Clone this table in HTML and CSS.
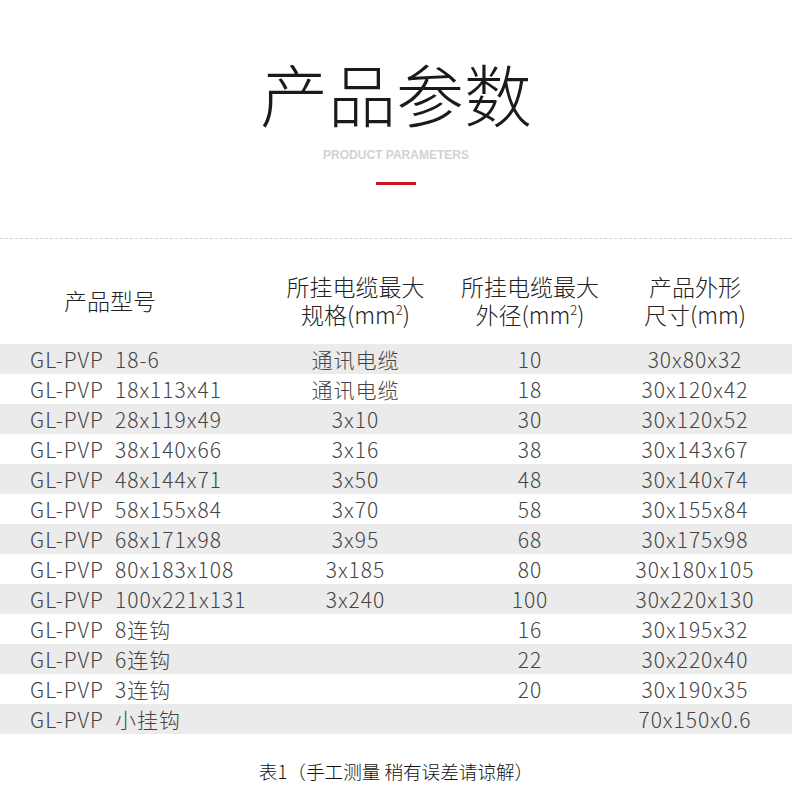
FILE: index.html
```html
<!DOCTYPE html>
<html lang="zh-CN">
<head>
<meta charset="utf-8">
<title>产品参数</title>
<link rel="stylesheet" href="styles.css">
</head>
<body>
<div class="page">
  <header class="hero">
    <h1 class="title">产品参数</h1>
    <p class="subtitle">PRODUCT PARAMETERS</p>
    <span class="accent"></span>
  </header>
  <div class="dashed"></div>
  <div class="table">
    <div class="row head">
      <div class="c1 h1c">产品型号</div>
      <div class="c2"><span class="ln">所挂电缆最大</span><span class="ln">规格(mm<sup>2</sup>)</span></div>
      <div class="c3"><span class="ln">所挂电缆最大</span><span class="ln">外径(mm<sup>2</sup>)</span></div>
      <div class="c4"><span class="ln">产品外形</span><span class="ln">尺寸(mm)</span></div>
    </div>
    <div class="row alt"><div class="c1"><span class="pre">GL-PVP</span>18-6</div><div class="c2">通讯电缆</div><div class="c3">10</div><div class="c4">30x80x32</div></div>
    <div class="row"><div class="c1"><span class="pre">GL-PVP</span>18x113x41</div><div class="c2">通讯电缆</div><div class="c3">18</div><div class="c4">30x120x42</div></div>
    <div class="row alt"><div class="c1"><span class="pre">GL-PVP</span>28x119x49</div><div class="c2">3x10</div><div class="c3">30</div><div class="c4">30x120x52</div></div>
    <div class="row"><div class="c1"><span class="pre">GL-PVP</span>38x140x66</div><div class="c2">3x16</div><div class="c3">38</div><div class="c4">30x143x67</div></div>
    <div class="row alt"><div class="c1"><span class="pre">GL-PVP</span>48x144x71</div><div class="c2">3x50</div><div class="c3">48</div><div class="c4">30x140x74</div></div>
    <div class="row"><div class="c1"><span class="pre">GL-PVP</span>58x155x84</div><div class="c2">3x70</div><div class="c3">58</div><div class="c4">30x155x84</div></div>
    <div class="row alt"><div class="c1"><span class="pre">GL-PVP</span>68x171x98</div><div class="c2">3x95</div><div class="c3">68</div><div class="c4">30x175x98</div></div>
    <div class="row"><div class="c1"><span class="pre">GL-PVP</span>80x183x108</div><div class="c2">3x185</div><div class="c3">80</div><div class="c4">30x180x105</div></div>
    <div class="row alt"><div class="c1"><span class="pre">GL-PVP</span>100x221x131</div><div class="c2">3x240</div><div class="c3">100</div><div class="c4">30x220x130</div></div>
    <div class="row"><div class="c1"><span class="pre">GL-PVP</span>8连钩</div><div class="c2"></div><div class="c3">16</div><div class="c4">30x195x32</div></div>
    <div class="row alt"><div class="c1"><span class="pre">GL-PVP</span>6连钩</div><div class="c2"></div><div class="c3">22</div><div class="c4">30x220x40</div></div>
    <div class="row"><div class="c1"><span class="pre">GL-PVP</span>3连钩</div><div class="c2"></div><div class="c3">20</div><div class="c4">30x190x35</div></div>
    <div class="row alt"><div class="c1"><span class="pre">GL-PVP</span>小挂钩</div><div class="c2"></div><div class="c3"></div><div class="c4">70x150x0.6</div></div>
  </div>
  <p class="caption">表1（手工测量 稍有误差请谅解）</p>
</div>
</body>
</html>
```

FILE: styles.css
```css
* { box-sizing: border-box; }
html, body { margin: 0; padding: 0; background: #fff; }
body {
  font-family: "Noto Sans CJK SC", "Noto Sans", sans-serif;
  color: #444;
}
.page {
  width: 792px;
  height: 805px;
  overflow: hidden;
}
.hero {
  display: flex;
  flex-direction: column;
  align-items: center;
  padding-top: 59px;
}
.title {
  margin: 0;
  font-size: 68px;
  line-height: 68px;
  font-weight: 300;
  color: #1a1a1a;
}
.subtitle {
  margin: 21px 0 0;
  font-family: "Liberation Sans", Arial, sans-serif;
  font-size: 12px;
  line-height: 14px;
  font-weight: bold;
  color: #d2d2d2;
}
.accent {
  display: block;
  width: 40px;
  height: 3px;
  margin-top: 20px;
  background: #c8161e;
}
.dashed {
  margin-top: 53px;
  border-top: 1px dashed #d2d2d2;
}
.table {
  display: flex;
  flex-direction: column;
}
.row {
  display: grid;
  grid-template-columns: 270px 171px 178px 152px;
  height: 30px;
  align-items: center;
  font-size: 21px;
  line-height: 30px;
  font-weight: 300;
  letter-spacing: 1px;
  color: #444;
  white-space: nowrap;
}
.row.alt { background: #ebebeb; }
.row.head {
  height: 105px;
  padding: 33px 0 16px;
  font-size: 23px;
  line-height: 28px;
  font-weight: 300;
  letter-spacing: 0;
  color: #222;
}
.head .c2, .head .c3, .head .c4 {
  display: flex;
  flex-direction: column;
  align-items: center;
}
.ln { display: block; height: 28px; }
.c1 { padding-left: 30px; }
.c2, .c3, .c4 { text-align: center; }
.head .h1c { padding-left: 64px; }
.pre { margin-right: 11px; }
sup {
  font-size: 13px;
  line-height: 0;
  vertical-align: 9px;
}
.caption {
  margin: 25px 0 0;
  text-align: center;
  font-size: 18.6px;
  line-height: 24px;
  font-weight: 300;
  color: #111;
}
```
